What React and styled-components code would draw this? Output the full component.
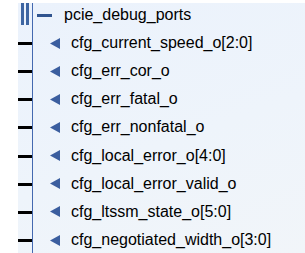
import React from "react";
import styled, { createGlobalStyle } from "styled-components";

const GlobalStyle = createGlobalStyle`
  html, body {
    margin: 0;
    padding: 0;
    background: #ffffff;
  }
  body {
    font-family: "Liberation Sans", Arial, sans-serif;
    overflow: hidden;
  }
`;

const ports = [
  "cfg_current_speed_o[2:0]",
  "cfg_err_cor_o",
  "cfg_err_fatal_o",
  "cfg_err_nonfatal_o",
  "cfg_local_error_o[4:0]",
  "cfg_local_error_valid_o",
  "cfg_ltssm_state_o[5:0]",
  "cfg_negotiated_width_o[3:0]",
];

const Block = styled.div`
  margin: 3px 0 0 18px;
  height: 250px;
  overflow: hidden;
  display: flex;
  flex-direction: column;
  background: linear-gradient(160deg, #ebf2fc 0%, #eef4fb 55%, #f1f5f9 100%);
`;

const Row = styled.div`
  display: flex;
  height: ${(p) => (p.$header ? "26px" : "28.15px")};
  flex: ${(p) => (p.$last ? "1 0 auto" : "none")};
`;

const Gutter = styled.div`
  width: 14px;
  flex: none;
  position: relative;
  display: flex;
  gap: 2px;
  padding-left: ${(p) => (p.$header ? "3px" : "0")};
  box-sizing: border-box;
`;

const Bar = styled.div`
  width: 3px;
  height: 22px;
  background: #3d65a2;
`;

const Pin = styled.div`
  position: absolute;
  left: -1px;
  right: 0;
  top: 13px;
  height: 3px;
  background: #000000;
`;

const Body = styled.div`
  flex: 1;
  display: flex;
  align-items: ${(p) => (p.$header ? "flex-start" : "center")};
  border-left: 1px solid #4469b0;
  padding-left: ${(p) => (p.$header ? "4px" : "17px")};
`;

const Minus = styled.div`
  width: 15px;
  height: 3px;
  margin-top: 11px;
  background: #30548f;
  flex: none;
`;

const Arrow = styled.svg`
  width: 10px;
  height: 11px;
  flex: none;
  display: block;
`;

const Label = styled.span`
  font-size: 16px;
  color: #000000;
  white-space: nowrap;
  line-height: ${(p) => (p.$header ? "23px" : "28px")};
  margin-left: ${(p) => (p.$header ? "12px" : "11px")};
`;

export default function App() {
  return (
    <>
      <GlobalStyle />
      <Block>
        <Row $header>
          <Gutter $header>
            <Bar />
            <Bar />
          </Gutter>
          <Body $header>
            <Minus />
            <Label $header>pcie_debug_ports</Label>
          </Body>
        </Row>
        {ports.map((name, i) => (
          <Row key={name} $last={i === ports.length - 1}>
            <Gutter>
              <Pin />
            </Gutter>
            <Body>
              <Arrow viewBox="0 0 10 11">
                <polygon points="0,5.5 10,0 10,11" fill="#3b5e9f" />
              </Arrow>
              <Label>{name}</Label>
            </Body>
          </Row>
        ))}
      </Block>
    </>
  );
}
